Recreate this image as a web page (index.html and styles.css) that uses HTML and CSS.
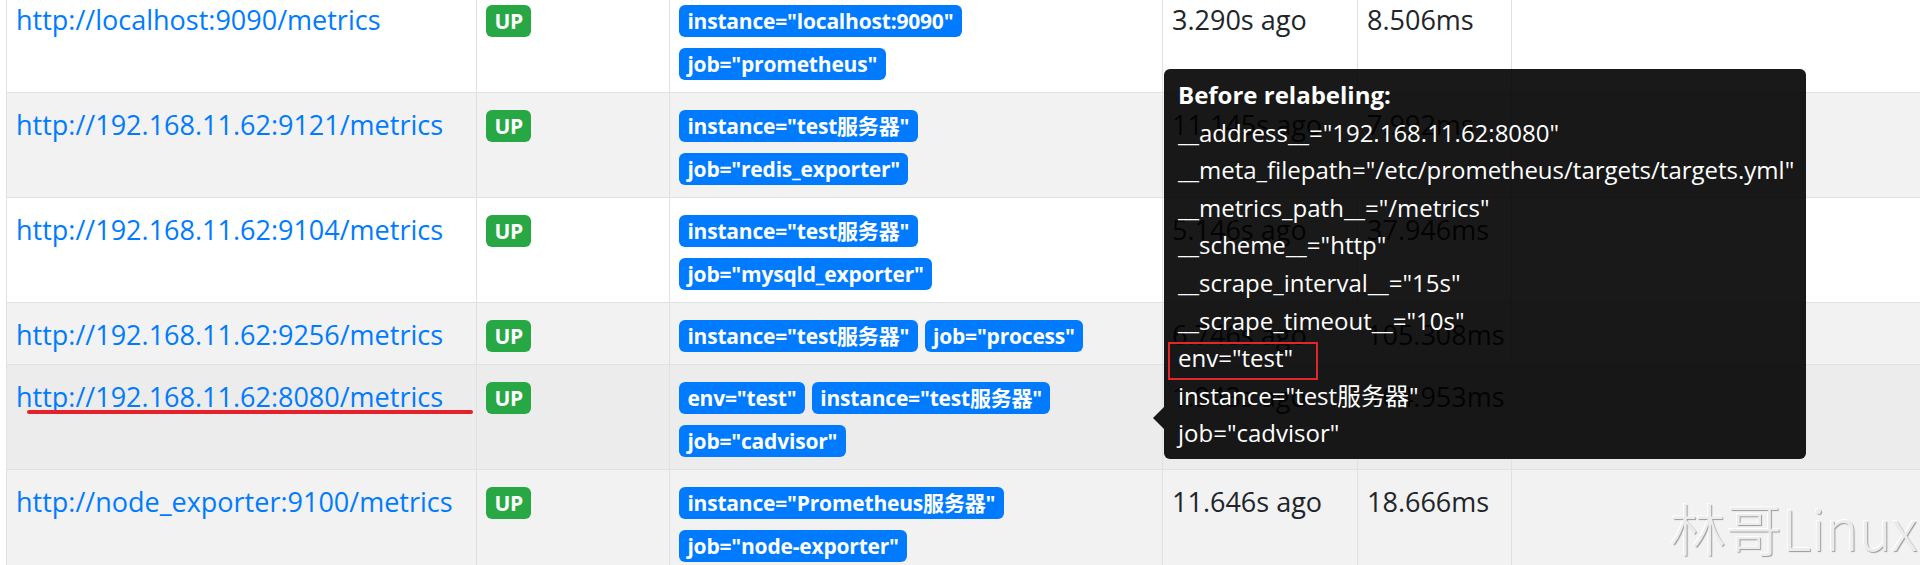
FILE: index.html
```html
<!DOCTYPE html>
<html lang="en">
<head>
<meta charset="utf-8">
<title>Targets</title>
<link rel="stylesheet" href="styles.css">
</head>
<body>
<div class="page">
  <table class="targets">
    <colgroup>
      <col class="c-endpoint"><col class="c-state"><col class="c-labels"><col class="c-scrape"><col class="c-dur"><col class="c-err">
    </colgroup>
    <tbody>
      <tr>
        <td class="txt"><a class="link" href="#">http://localhost:9090/metrics</a></td>
        <td><span class="badge up">UP</span></td>
        <td class="labels"><span class="badge label">instance="localhost:9090"</span> <span class="badge label">job="prometheus"</span></td>
        <td class="txt">3.290s ago</td>
        <td class="txt">8.506ms</td>
        <td></td>
      </tr>
      <tr class="striped">
        <td class="txt"><a class="link" href="#">http://192.168.11.62:9121/metrics</a></td>
        <td><span class="badge up">UP</span></td>
        <td class="labels"><span class="badge label">instance="test服务器"</span> <span class="badge label">job="redis_exporter"</span></td>
        <td class="txt">11.145s ago</td>
        <td class="txt">7.992ms</td>
        <td></td>
      </tr>
      <tr>
        <td class="txt"><a class="link" href="#">http://192.168.11.62:9104/metrics</a></td>
        <td><span class="badge up">UP</span></td>
        <td class="labels"><span class="badge label">instance="test服务器"</span> <span class="badge label">job="mysqld_exporter"</span></td>
        <td class="txt">5.146s ago</td>
        <td class="txt">37.946ms</td>
        <td></td>
      </tr>
      <tr class="striped">
        <td class="txt"><a class="link" href="#">http://192.168.11.62:9256/metrics</a></td>
        <td><span class="badge up">UP</span></td>
        <td class="labels"><span class="badge label">instance="test服务器"</span> <span class="badge label">job="process"</span></td>
        <td class="txt">6.746s ago</td>
        <td class="txt">105.308ms</td>
        <td></td>
      </tr>
      <tr class="hover">
        <td class="txt"><a class="link" href="#">http://192.168.11.62:8080/metrics</a></td>
        <td><span class="badge up">UP</span></td>
        <td class="labels"><span class="badge label">env="test"</span> <span class="badge label">instance="test服务器"</span> <span class="badge label">job="cadvisor"</span></td>
        <td class="txt">1.943s ago</td>
        <td class="txt">104.953ms</td>
        <td></td>
      </tr>
      <tr class="striped">
        <td class="txt"><a class="link" href="#">http://node_exporter:9100/metrics</a></td>
        <td><span class="badge up">UP</span></td>
        <td class="labels"><span class="badge label">instance="Prometheus服务器"</span> <span class="badge label">job="node-exporter"</span></td>
        <td class="txt">11.646s ago</td>
        <td class="txt">18.666ms</td>
        <td></td>
      </tr>
    </tbody>
  </table>

  <div class="underline-mark"></div>

  <div class="tooltip">
    <div class="tip-arrow"></div>
    <div class="tip-line tip-title">Before relabeling:</div>
    <div class="tip-line">__address__="192.168.11.62:8080"</div>
    <div class="tip-line">__meta_filepath="/etc/prometheus/targets/targets.yml"</div>
    <div class="tip-line">__metrics_path__="/metrics"</div>
    <div class="tip-line">__scheme__="http"</div>
    <div class="tip-line">__scrape_interval__="15s"</div>
    <div class="tip-line">__scrape_timeout__="10s"</div>
    <div class="tip-line">env="test"</div>
    <div class="tip-line">instance="test服务器"</div>
    <div class="tip-line">job="cadvisor"</div>
    <div class="box-mark"></div>
  </div>

  <div class="watermark">林哥Linux</div>
</div>
</body>
</html>
```

FILE: styles.css
```css
html, body {
  margin: 0;
  padding: 0;
  background: #ffffff;
  overflow: hidden;
}

.page {
  position: relative;
  width: 1920px;
  height: 565px;
  overflow: hidden;
  font-family: "Open Sans", "Noto Sans CJK SC", sans-serif;
  color: #212529;
}

.targets {
  border-collapse: collapse;
  table-layout: fixed;
  width: 2004px;
  margin: -13px 0 0 6px;
  font-size: 27px;
  line-height: 43px;
}

.c-endpoint { width: 470px; }
.c-state { width: 193px; }
.c-labels { width: 493px; }
.c-scrape { width: 195px; }
.c-dur { width: 154px; }
.c-err { width: 499px; }

.targets td {
  border: 1px solid #dee2e6;
  padding: 8.5px 8px 9.5px 9px;
  vertical-align: top;
  white-space: nowrap;
}

.targets td.txt {
  padding-top: 10px;
  padding-bottom: 8px;
}

.targets td.labels {
  white-space: normal;
}

.targets tr.striped { background: #f2f2f2; }
.targets tr.hover { background: #ececec; }

.link {
  color: #007bff;
  text-decoration: none;
}

.badge {
  display: inline-block;
  font-family: "Open Sans", "Noto Sans CJK SC", sans-serif;
  font-size: 21px;
  font-weight: 700;
  line-height: 21px;
  padding: 5.5px 8.4px;
  border-radius: 6px;
  color: #ffffff;
  vertical-align: baseline;
  letter-spacing: -0.2px;
  white-space: nowrap;
}

.badge.up { background: #28a745; }
.badge.label { background: #007bff; }

.underline-mark {
  position: absolute;
  left: 27px;
  top: 410px;
  width: 446px;
  height: 3.5px;
  border-radius: 2px;
  background: #e5212d;
}

.tooltip {
  position: absolute;
  left: 1164px;
  top: 69px;
  width: 642px;
  box-sizing: border-box;
  padding: 7px 14px;
  background: rgba(0, 0, 0, 0.9);
  border-radius: 6px;
  color: #ffffff;
  font-size: 24px;
  line-height: 37.6px;
  white-space: nowrap;
}

.tip-title { font-weight: 700; }

.tip-arrow {
  position: absolute;
  left: -11px;
  top: 338px;
  width: 0;
  height: 0;
  border-top: 11px solid transparent;
  border-bottom: 11px solid transparent;
  border-right: 11px solid rgba(0, 0, 0, 0.9);
}

.box-mark {
  position: absolute;
  left: 4px;
  top: 273px;
  width: 150px;
  height: 38px;
  box-sizing: border-box;
  border: 2px solid #e3262a;
}

.watermark {
  position: absolute;
  left: 1670px;
  top: 492px;
  font-family: "Noto Sans CJK SC", "Noto Sans", sans-serif;
  font-weight: 300;
  font-size: 56px;
  line-height: 70px;
  color: #ececec;
  text-shadow: 1px 1px 1px #9a9a9a, -1px -1px 0 #ffffff;
  white-space: nowrap;
}
```
